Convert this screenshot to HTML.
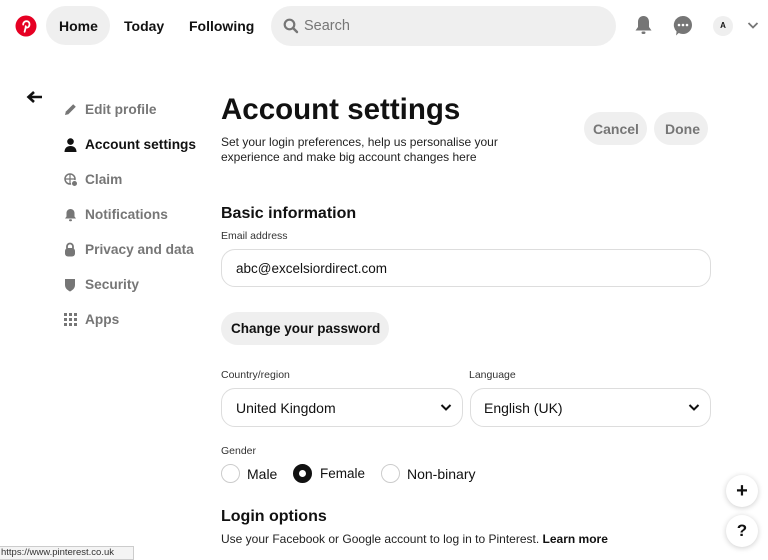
<!DOCTYPE html>
<html><head><meta charset="utf-8"><style>
*{margin:0;padding:0;box-sizing:border-box}
body{width:768px;height:558px;overflow:hidden;background:#fff;font-family:"Liberation Sans",Arial,sans-serif;color:#111;position:relative}
.a{position:absolute;white-space:nowrap}
.b{font-weight:bold}
.nav{font-size:14px;font-weight:bold;color:#111}
.side{font-size:13.7px;font-weight:bold;color:#767676}
.pill{background:#efefef;border-radius:20px}
.field{border:1.5px solid #ddd;border-radius:14px;background:#fff}
.lbl{font-size:10.5px;color:#333}
.radio{width:19px;height:19px;border:1.5px solid #ccc;border-radius:50%}
.fab{width:32px;height:32px;border-radius:50%;background:#fff;box-shadow:0 1px 6px rgba(0,0,0,.2);text-align:center;font-weight:bold;font-size:20px;line-height:32px}
</style></head><body>
<svg class="a" style="left:15px;top:15px" width="22" height="22" viewBox="0 0 22 22"><circle cx="11" cy="11" r="10.5" fill="#e60023"/><path d="M9.6 16.8l1.3-5.3M8.2 9.6c0-2.2 1.6-3.4 3.3-3.4 1.8 0 3 1.2 3 2.9 0 2-1.1 3.5-2.5 3.5-.9 0-1.5-.6-1.3-1.4" stroke="#fff" stroke-width="1.8" fill="none" stroke-linecap="round"/></svg>
<div class="a pill" style="left:46px;top:6px;width:64px;height:39px"></div>
<div class="a nav" style="left:59px;top:18px">Home</div>
<div class="a nav" style="left:124px;top:18px">Today</div>
<div class="a nav" style="left:189px;top:18px">Following</div>
<div class="a pill" style="left:271px;top:6px;width:345px;height:40px;border-radius:20px"></div>
<svg class="a" style="left:283px;top:18px" width="16" height="16" viewBox="0 0 16 16"><circle cx="6.5" cy="6.5" r="4.8" stroke="#767676" stroke-width="2.2" fill="none"/><path d="M10 10l4 4" stroke="#767676" stroke-width="2.4" stroke-linecap="round"/></svg>
<div class="a" style="left:304px;top:18px;font-size:14.5px;color:#767676">Search</div>
<svg class="a" style="left:634px;top:15px" width="19" height="21" viewBox="0 0 19 21"><path d="M9.5 1c-3.5 0-5.5 2.7-5.5 6v5L1.5 15.5h16L15 12V7c0-3.3-2-6-5.5-6z" fill="#767676"/><rect x="7.5" y="16.5" width="4" height="2.5" rx="1.2" fill="#767676"/></svg>
<svg class="a" style="left:673px;top:15px" width="20" height="21" viewBox="0 0 20 21"><path d="M10 1a9 9 0 0 1 0 18c-1.5 0-3-.4-4.3-1L3 20.5l.6-4A9 9 0 0 1 10 1z" fill="#767676"/><circle cx="6" cy="10" r="1.3" fill="#fff"/><circle cx="10" cy="10" r="1.3" fill="#fff"/><circle cx="14" cy="10" r="1.3" fill="#fff"/></svg>
<div class="a" style="left:713px;top:16px;width:20px;height:20px;border-radius:50%;background:#efefef;font-size:8px;font-weight:bold;text-align:center;line-height:20px">A</div>
<svg class="a" style="left:747px;top:21px" width="12" height="9" viewBox="0 0 12 9"><path d="M1.5 2l4.5 4.5L10.5 2" stroke="#767676" stroke-width="1.8" fill="none"/></svg>
<svg class="a" style="left:26px;top:90px" width="17" height="14" viewBox="0 0 17 14"><path d="M16 7H3M8 2L2.5 7 8 12" stroke="#111" stroke-width="2.6" fill="none"/></svg>
<svg class="a" style="left:64px;top:103px" width="13" height="13" viewBox="0 0 13 13"><path d="M1 12l.8-3.4L9.2 1.2l2.6 2.6-7.4 7.4z" fill="#767676"/></svg>
<div class="a side" style="left:85px;top:102px">Edit profile</div>
<svg class="a" style="left:64px;top:138px" width="13" height="14" viewBox="0 0 13 14"><circle cx="6.5" cy="3.6" r="3.3" fill="#111"/><path d="M0.5 14c0-4 2.5-6 6-6s6 2 6 6z" fill="#111"/></svg>
<div class="a side" style="left:85px;top:137px;color:#111">Account settings</div>
<svg class="a" style="left:64px;top:173px" width="14" height="14" viewBox="0 0 14 14"><circle cx="6" cy="6" r="5" stroke="#767676" stroke-width="1.5" fill="none"/><path d="M1 6h10M6 1v10" stroke="#767676" stroke-width="1.2"/><circle cx="10.5" cy="10.5" r="3" fill="#767676" stroke="#fff"/></svg>
<div class="a side" style="left:85px;top:172px">Claim</div>
<svg class="a" style="left:64px;top:208px" width="13" height="14" viewBox="0 0 13 14"><path d="M6.5 1C4 1 2.5 3 2.5 5v3.5L1 10.5h11L10.5 8.5V5C10.5 3 9 1 6.5 1z" fill="#767676"/><rect x="5" y="11.2" width="3" height="2" rx="1" fill="#767676"/></svg>
<div class="a side" style="left:85px;top:207px">Notifications</div>
<svg class="a" style="left:64px;top:242px" width="12" height="15" viewBox="0 0 12 15"><path d="M3 6.5V4.5a3 3 0 0 1 6 0v2" stroke="#767676" stroke-width="1.8" fill="none"/><rect x="1" y="6" width="10" height="8.5" rx="3" fill="#767676"/></svg>
<div class="a side" style="left:85px;top:242px">Privacy and data</div>
<svg class="a" style="left:64px;top:278px" width="12" height="14" viewBox="0 0 12 14"><path d="M1 1h10v6c0 3.5-3 5.5-5 6.5C4 12.5 1 10.5 1 7z" fill="#767676"/></svg>
<div class="a side" style="left:85px;top:277px">Security</div>
<svg class="a" style="left:64px;top:313px" width="13" height="13" viewBox="0 0 13 13" fill="#767676"><rect x="0" y="0" width="3" height="3"/><rect x="5" y="0" width="3" height="3"/><rect x="10" y="0" width="3" height="3"/><rect x="0" y="5" width="3" height="3"/><rect x="5" y="5" width="3" height="3"/><rect x="10" y="5" width="3" height="3"/><rect x="0" y="10" width="3" height="3"/><rect x="5" y="10" width="3" height="3"/><rect x="10" y="10" width="3" height="3"/></svg>
<div class="a side" style="left:85px;top:312px">Apps</div>
<div class="a b" style="left:221px;top:93px;font-size:29.5px;letter-spacing:0px">Account settings</div>
<div class="a" style="left:221px;top:135px;font-size:12px;line-height:15px;color:#222">Set your login preferences, help us personalise your<br>experience and make big account changes here</div>
<div class="a pill" style="left:584px;top:112px;width:63px;height:33px"></div>
<div class="a b" style="left:593px;top:121px;font-size:14px;color:#767676">Cancel</div>
<div class="a pill" style="left:654px;top:112px;width:54px;height:33px"></div>
<div class="a b" style="left:665px;top:121px;font-size:14px;color:#767676">Done</div>
<div class="a b" style="left:221px;top:205px;font-size:16px">Basic information</div>
<div class="a lbl" style="left:221px;top:230px">Email address</div>
<div class="a field" style="left:221px;top:249px;width:490px;height:38px"></div>
<div class="a" style="left:236px;top:261px;font-size:13.5px">abc@excelsiordirect.com</div>
<div class="a pill" style="left:221px;top:312px;width:168px;height:33px"></div>
<div class="a b" style="left:231px;top:321px;font-size:13.5px">Change your password</div>
<div class="a lbl" style="left:221px;top:369px">Country/region</div>
<div class="a lbl" style="left:469px;top:369px">Language</div>
<div class="a field" style="left:221px;top:388px;width:242px;height:39px"></div>
<div class="a" style="left:236px;top:400px;font-size:14px">United Kingdom</div>
<svg class="a" style="left:440px;top:403px" width="12" height="9" viewBox="0 0 12 9"><path d="M1.5 2l4.5 4.5L10.5 2" stroke="#111" stroke-width="2" fill="none"/></svg>
<div class="a field" style="left:470px;top:388px;width:241px;height:39px"></div>
<div class="a" style="left:484px;top:400px;font-size:14px">English (UK)</div>
<svg class="a" style="left:688px;top:403px" width="12" height="9" viewBox="0 0 12 9"><path d="M1.5 2l4.5 4.5L10.5 2" stroke="#111" stroke-width="2" fill="none"/></svg>
<div class="a lbl" style="left:221px;top:445px">Gender</div>
<div class="a radio" style="left:221px;top:464px"></div>
<div class="a" style="left:247px;top:466px;font-size:14px">Male</div>
<div class="a radio" style="left:293px;top:464px;border:6px solid #111"></div>
<div class="a" style="left:320px;top:466px;font-size:13.5px">Female</div>
<div class="a radio" style="left:381px;top:464px"></div>
<div class="a" style="left:407px;top:466px;font-size:14px">Non-binary</div>
<div class="a b" style="left:221px;top:508px;font-size:16px">Login options</div>
<div class="a" style="left:221px;top:532px;font-size:12px;color:#222">Use your Facebook or Google account to log in to Pinterest. <b style="color:#111">Learn more</b></div>
<div class="a fab" style="left:726px;top:475px">+</div>
<div class="a fab" style="left:726px;top:515px;font-size:17px">?</div>
<div class="a" style="left:-2px;top:546px;width:136px;height:14px;background:#f4f4f4;border:1px solid #ccc;font-size:9.5px;color:#333;padding-left:2px;line-height:12px">https://www.pinterest.co.uk</div>
</body></html>
